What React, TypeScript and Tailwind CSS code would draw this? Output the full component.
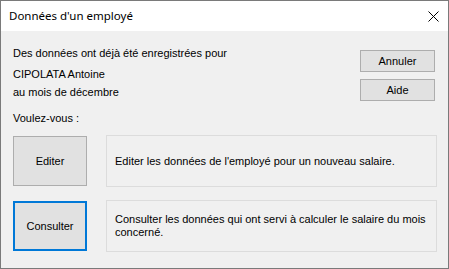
import React from 'react'

const body = { fontFamily: '"Liberation Sans", Arial, sans-serif' }

const WinButton = ({ label, focused = false, className = '' }: { label: string; focused?: boolean; className?: string }) => (
  <button
    className={
      'flex items-center justify-center bg-[#e1e1e1] text-[11px] leading-[13px] text-black ' +
      (focused ? 'border-2 border-[#0078d7] ' : 'border border-[#adadad] ') +
      className
    }
    style={body}
  >
    {label}
  </button>
)

const ChoiceRow = ({ label, focused, children }: { label: string; focused?: boolean; children: React.ReactNode }) => (
  <div className="flex items-center">
    <WinButton label={label} focused={focused} className="w-[74px] h-[50px]" />
    <div className="ml-[19px] flex h-[52px] w-[331px] items-center border border-[#dcdcdc] pl-[8px] text-[11px] leading-[13px] text-black">
      <p>{children}</p>
    </div>
  </div>
)

export default function App() {
  return (
    <div className="flex h-[269px] w-[449px] flex-col border border-[#7a7a7a] bg-[#f0f0f0]" style={body}>
      {/* title bar */}
      <div className="flex h-[30px] shrink-0 items-center justify-between bg-white pl-[8px] pr-[9px]">
        <span className="text-[11.5px] text-black" style={{ fontFamily: '"Segoe UI", "Noto Sans", sans-serif' }}>
          Données d'un employé
        </span>
        <svg width="11" height="11" viewBox="0 0 11 11" className="mt-[1px]">
          <path d="M0.5 0.5 L10.5 10.5 M10.5 0.5 L0.5 10.5" stroke="#000" strokeWidth="1" fill="none" />
        </svg>
      </div>

      <div className="flex flex-col pl-[12px] text-[11px] leading-[13px] text-black">
        <div className="flex items-start">
          <div className="mt-[16px] flex flex-1 flex-col">
            <p>Des données ont déjà été enregistrées pour</p>
            <p className="mt-[8px]">CIPOLATA Antoine</p>
            <p className="mt-[5px]">au mois de décembre</p>
            <p className="mt-[13px]">Voulez-vous :</p>
          </div>
          <div className="mr-[13px] mt-[19px] flex w-[75px] flex-col gap-[7px]">
            <WinButton label="Annuler" className="h-[22px] w-[75px]" />
            <WinButton label="Aide" className="h-[22px] w-[75px]" />
          </div>
        </div>

        <div className="mt-[10px] flex flex-col gap-[13px]">
          <ChoiceRow label="Editer">Editer les données de l'employé pour un nouveau salaire.</ChoiceRow>
          <ChoiceRow label="Consulter" focused>
            Consulter les données qui ont servi à calculer le salaire du mois
            <br />
            concerné.
          </ChoiceRow>
        </div>
      </div>
    </div>
  )
}
